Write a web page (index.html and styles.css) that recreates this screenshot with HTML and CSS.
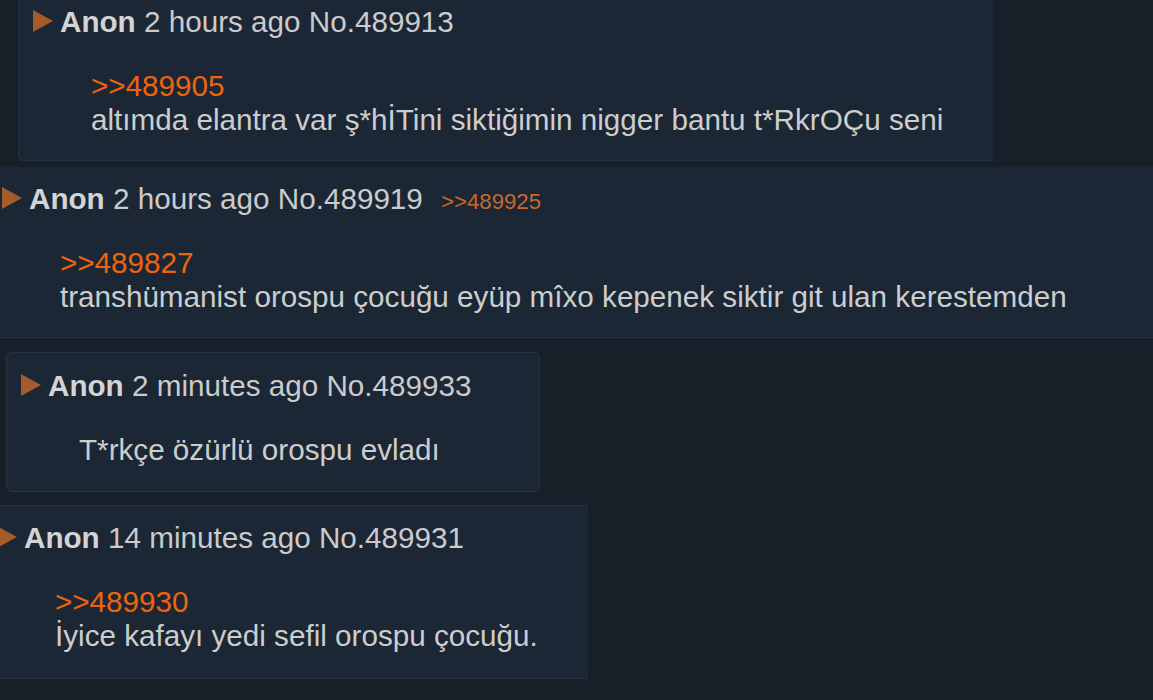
FILE: index.html
```html
<!DOCTYPE html>
<html lang="tr">
<head>
<meta charset="utf-8">
<title>Thread</title>
<link rel="stylesheet" href="styles.css">
</head>
<body>
<main class="thread">
  <article class="post post-nested">
    <div class="post-head"><span class="marker"></span><b class="name">Anon</b> <span class="time">2 hours ago</span> <span class="num">No.489913</span></div>
    <div class="post-body"><a class="quote">&gt;&gt;489905</a><br>altımda elantra var ş*hİTini siktiğimin nigger bantu t*RkrOÇu seni</div>
  </article>

  <article class="post post-wide">
    <div class="post-head"><span class="marker"></span><b class="name">Anon</b> <span class="time">2 hours ago</span> <span class="num">No.489919</span> <a class="backlink">&gt;&gt;489925</a></div>
    <div class="post-body"><a class="quote">&gt;&gt;489827</a><br>transhümanist orospu çocuğu eyüp mîxo kepenek siktir git ulan kerestemden</div>
  </article>

  <article class="post post-boxed">
    <div class="post-head"><span class="marker"></span><b class="name">Anon</b> <span class="time">2 minutes ago</span> <span class="num">No.489933</span></div>
    <div class="post-body">T*rkçe özürlü orospu evladı</div>
  </article>

  <article class="post post-last">
    <div class="post-head"><span class="marker"></span><b class="name">Anon</b> <span class="time">14 minutes ago</span> <span class="num">No.489931</span></div>
    <div class="post-body"><a class="quote">&gt;&gt;489930</a><br>İyice kafayı yedi sefil orospu çocuğu.</div>
  </article>
</main>
</body>
</html>
```

FILE: styles.css
```css
html, body {
  margin: 0;
  padding: 0;
  background: #171f29;
}

body {
  width: 1153px;
  height: 700px;
  overflow: hidden;
  font-family: "Liberation Sans", Arial, sans-serif;
  font-size: 29.65px;
  line-height: 34px;
  color: #cdcdcd;
}

.thread {
  display: flex;
  flex-direction: column;
  align-items: flex-start;
}

.post {
  box-sizing: border-box;
  background: #1b2735;
  padding: 15px 14px 23px 14px;
  border-bottom: 1px solid #283444;
}

.post-head {
  margin-bottom: 30px;
  white-space: nowrap;
  color: #cbcbcb;
}

.name {
  font-weight: bold;
  color: #d4d4d4;
}

.marker {
  display: inline-block;
  width: 20px;
  height: 22px;
  margin-right: 7px;
  background: #a75a2a;
  clip-path: polygon(0 0, 100% 50%, 0 100%);
}

.backlink {
  font-size: 22.2px;
  line-height: 1;
  color: #c9672f;
  margin-left: 10px;
}

.post-body {
  padding-left: 58px;
  white-space: nowrap;
}

.quote {
  color: #ee640c;
}

.post-nested {
  margin-top: -10px;
  margin-left: 18px;
  width: 975px;
  border-left: 1px solid #263241;
  border-bottom-left-radius: 6px;
}

.post-wide {
  margin-top: 6px;
  margin-left: -12px;
  align-self: stretch;
}

.post-boxed {
  margin-top: 14px;
  margin-left: 6px;
  width: 534px;
  padding-top: 16px;
  padding-bottom: 24px;
  border: 1px solid #29343f;
  border-radius: 6px;
}

.post-last {
  margin-top: 13px;
  margin-left: -17px;
  width: 605px;
  padding-bottom: 25px;
  border-top: 1px solid #263242;
}
```
